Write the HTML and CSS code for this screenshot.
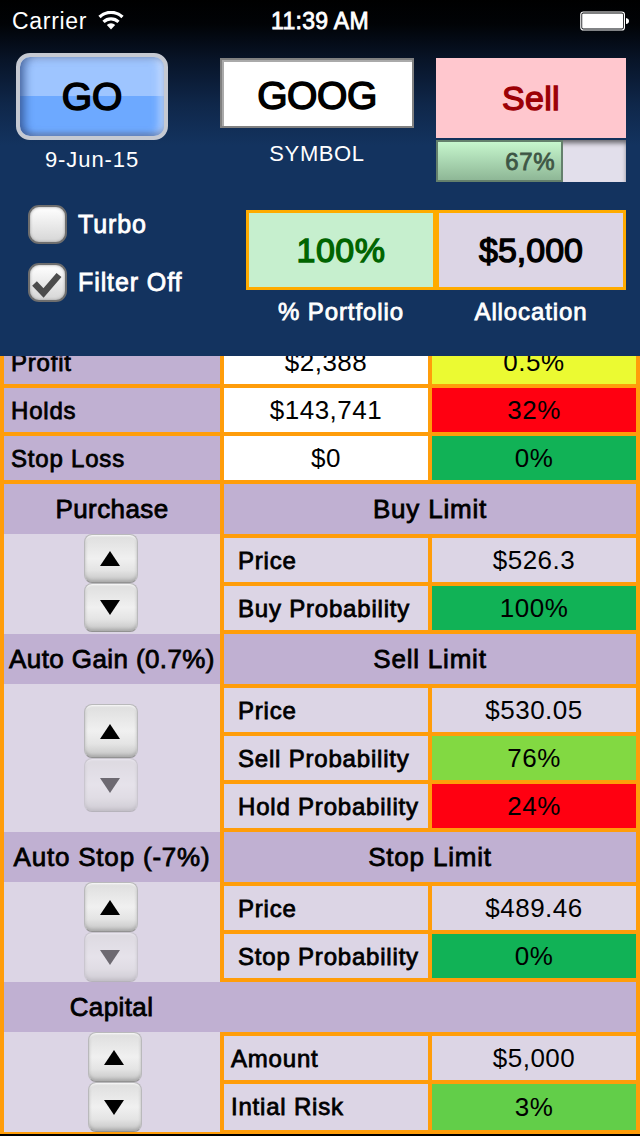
FILE: index.html
```
<!DOCTYPE html>
<html lang="en">
<head>
  <meta charset="UTF-8" />
  <meta name="viewport" content="width=device-width, initial-scale=1.0"/>
  <title>Trade Limits</title>
  <link rel="stylesheet" href="styles.css">
</head>
<body>
  <header class="header">
    <div class="status">
      <div class="carrier">
        <span>Carrier</span>
        <svg class="wifi" width="26" height="19" viewBox="0 0 26 19">
          <path d="M1.5 6 A16.5 16.5 0 0 1 24.5 6" fill="none" stroke="#fff" stroke-width="3.2"/>
          <path d="M5.5 10.8 A11 11 0 0 1 20.5 10.8" fill="none" stroke="#fff" stroke-width="3.2"/>
          <path d="M8.8 14 A6 6 0 0 1 17.2 14 L13 18.5 Z" fill="#fff"/>
        </svg>
      </div>
      <div class="time medium">11:39 AM</div>
      <svg class="battery" width="50" height="20" viewBox="0 0 50 20">
        <rect x="0.8" y="1" width="43.6" height="18" rx="2.5" fill="none" stroke="#fff" stroke-width="1.2"/>
        <rect x="2.2" y="2.4" width="40.8" height="15.2" rx="1" fill="#fff"/>
        <path d="M46 7 Q49 7.5 49 10 Q49 12.5 46 13 Z" fill="#fff"/>
      </svg>
    </div>

    <div class="quote">
      <div class="go-col">
        <button class="go medium">GO</button>
        <div class="date">9-Jun-15</div>
      </div>
      <div class="symbol-col">
        <div class="symbol medium">GOOG</div>
        <div class="caption">SYMBOL</div>
      </div>
      <div class="signal-col">
        <div class="signal medium">Sell</div>
        <div class="progress"><div class="progress-bar medium" style="width: 67%">67%</div></div>
      </div>
    </div>

    <div class="options">
      <div class="checks">
        <label class="check-row medium"><span class="check"></span>Turbo</label>
        <label class="check-row medium">
          <span class="check">
            <svg width="35" height="35" viewBox="0 0 35 35"><path d="M4.5 18.5 L13.5 28 L29 10" fill="none" stroke="#4c4c4c" stroke-width="6.5"/></svg>
          </span>Filter Off</label>
      </div>
      <div class="alloc">
        <div class="alloc-box portfolio medium">100%</div>
        <div class="alloc-box medium">$5,000</div>
        <div class="alloc-label medium">% Portfolio</div>
        <div class="alloc-label medium">Allocation</div>
      </div>
    </div>
  </header>

  <main class="results">
    <div class="summary">
      <div class="name medium">Profit</div><div class="value white">$2,388</div><div class="value yellow">0.5%</div>
      <div class="name medium">Holds</div><div class="value white">$143,741</div><div class="value red">32%</div>
      <div class="name medium">Stop Loss</div><div class="value white">$0</div><div class="value green">0%</div>
    </div>

    <section class="section">
      <div class="side">
        <div class="title medium">Purchase</div>
        <div class="stepper short">
          <button class="step"><span class="up"></span></button>
          <button class="step"><span class="down"></span></button>
        </div>
      </div>
      <div class="limits">
        <div class="title medium">Buy Limit</div>
        <div class="label medium">Price</div><div class="value">$526.3</div>
        <div class="label medium">Buy Probability</div><div class="value green">100%</div>
      </div>
    </section>

    <section class="section">
      <div class="side">
        <div class="title medium">Auto Gain (0.7%)</div>
        <div class="stepper tall">
          <button class="step"><span class="up"></span></button>
          <button class="step" disabled><span class="down"></span></button>
        </div>
      </div>
      <div class="limits">
        <div class="title medium">Sell Limit</div>
        <div class="label medium">Price</div><div class="value">$530.05</div>
        <div class="label medium">Sell Probability</div><div class="value lime">76%</div>
        <div class="label medium">Hold Probability</div><div class="value red">24%</div>
      </div>
    </section>

    <section class="section">
      <div class="side">
        <div class="title wide medium">Auto Stop (-7%)</div>
        <div class="stepper">
          <button class="step"><span class="up"></span></button>
          <button class="step" disabled><span class="down"></span></button>
        </div>
      </div>
      <div class="limits">
        <div class="title medium">Stop Limit</div>
        <div class="label medium">Price</div><div class="value">$489.46</div>
        <div class="label medium">Stop Probability</div><div class="value green">0%</div>
      </div>
    </section>

    <section class="section capital">
      <div class="title medium">Capital</div>
      <div class="side">
        <div class="stepper">
          <button class="step"><span class="up"></span></button>
          <button class="step"><span class="down"></span></button>
        </div>
      </div>
      <div class="limits">
        <div class="label medium">Amount</div><div class="value">$5,000</div>
        <div class="label medium">Intial Risk</div><div class="value light-green">3%</div>
      </div>
    </section>
  </main>
</body>
</html>
```
FILE: styles.css
```
* {
  box-sizing: border-box;
}

body {
  margin: 0;
  width: 640px;
  height: 1136px;
  overflow: hidden;
  background: #000;
  color: #000;
  font-family: "Liberation Sans", Arial, sans-serif;
}

button {
  padding: 0;
  border: none;
  font-family: inherit;
}

/* medium weight, between regular and bold */
.medium {
  -webkit-text-stroke: 0.8px currentColor;
}

/* Header */
.header {
  height: 356px;
  background: linear-gradient(#000 0, #010306 24px, #081428 60px, #0f274a 105px, #13335f 145px);
  color: #fff;
}

.status {
  display: grid;
  grid-template-columns: 1fr auto 1fr;
  align-items: center;
  height: 40px;
  padding: 2px 10px 0 12px;
  font-size: 23px;
}

.carrier {
  display: flex;
  align-items: center;
  gap: 11px;
  letter-spacing: 0.7px;
}

.wifi {
  margin-top: -2px;
}

.time {
  margin-right: 2px;
  letter-spacing: 0.3px;
}

.battery {
  justify-self: end;
  margin-top: -1px;
}

.quote {
  display: grid;
  grid-template-columns: 182px 194px 190px;
  column-gap: 22px;
  height: 160px;
  padding: 13px 14px 0 16px;
  text-align: center;
}

.go-col {
  width: 152px;
}

.go {
  width: 152px;
  height: 87px;
  border: 4px solid #c5c9d2;
  border-radius: 14px;
  background: linear-gradient(#9ec5ff 50%, #6da9ff 50%);
  box-shadow: inset 5px 0 8px rgba(30, 60, 120, 0.6), inset -4px 0 8px rgba(225, 235, 255, 0.7), inset 0 -3px 4px rgba(30, 60, 120, 0.4);
  color: #000;
  font-size: 39px;
  -webkit-text-stroke-width: 1.6px;
}

.date,
.caption {
  font-size: 22px;
  line-height: 26px;
}

.date {
  margin-top: 7px;
  letter-spacing: 0.9px;
}

.symbol-col,
.signal-col {
  padding-top: 5px;
}

.symbol {
  height: 70px;
  border: 2px solid #818181;
  box-shadow: inset 2px 2px 0 #aaa;
  background: #fff;
  color: #000;
  font-size: 39px;
  line-height: 72px;
  letter-spacing: -0.4px;
  -webkit-text-stroke-width: 1.5px;
}

.caption {
  margin-top: 13px;
  letter-spacing: 0.6px;
}

.signal {
  height: 80px;
  background: #ffc7ce;
  color: #9c0006;
  font-size: 34px;
  line-height: 81px;
  letter-spacing: 0.3px;
  -webkit-text-stroke-width: 1.3px;
}

.progress {
  height: 42px;
  margin-top: 2px;
  background: #e2dfeb;
  box-shadow: inset 0 4px 5px -1px rgba(0, 0, 0, 0.55);
}

.progress-bar {
  height: 42px;
  padding-right: 6px;
  border: 2px solid #64806c;
  background: linear-gradient(#c6f6cd, #8eb796);
  color: #3e5645;
  font-size: 24px;
  line-height: 39px;
  letter-spacing: 0.7px;
  text-align: right;
}

.options {
  display: flex;
  justify-content: space-between;
  padding: 4px 14px 0 28px;
}

.check-row {
  display: flex;
  align-items: center;
  height: 40px;
  margin-bottom: 18px;
  font-size: 25px;
  letter-spacing: 0.9px;
}

.check {
  width: 39px;
  height: 39px;
  margin-right: 11px;
  border: 2px solid #6e6e6e;
  border-radius: 11px;
  background: linear-gradient(#fff, #d6d6d6);
  box-shadow: inset 0 0 3px #999;
}

.alloc {
  display: grid;
  grid-template-columns: 190px 190px;
  margin-top: 6px;
  text-align: center;
}

.alloc-box {
  height: 80px;
  border: 3px solid #ffab00;
  background: #dcd5e5;
  color: #000;
  font-size: 34px;
  line-height: 75px;
  -webkit-text-stroke-width: 1.3px;
}

.alloc-box.portfolio {
  background: #c6efce;
  color: #006400;
  letter-spacing: 0.5px;
}

.alloc-label {
  padding-top: 8px;
  font-size: 24px;
  line-height: 28px;
  letter-spacing: 0.9px;
}

/* Results list, scrolled to its end */
.results {
  display: flex;
  flex-direction: column;
  justify-content: flex-end;
  height: 778px;
  overflow: hidden;
  padding: 0 4px;
  background: #ff9d0a;
}

.summary {
  display: grid;
  grid-template-columns: 216px 204px 204px;
  grid-auto-rows: 44px;
  gap: 4px;
  padding-bottom: 4px;
}

.name,
.label {
  font-size: 24px;
  line-height: 46px;
  letter-spacing: 0.8px;
  white-space: nowrap;
}

.name {
  padding-left: 7px;
  background: #c0b0d2;
}

.label {
  padding-left: 14px;
  background: #dcd5e5;
}

.value {
  background: #dcd5e5;
  font-size: 26px;
  line-height: 45px;
  letter-spacing: 0.5px;
  text-align: center;
}

.white {
  background: #fff;
}

.yellow {
  background: #ebfa32;
}

.red {
  background: #ff0011;
}

.green {
  background: #11b256;
}

.lime {
  background: #82d942;
}

.light-green {
  background: #62ce49;
}

.section {
  display: grid;
  grid-template-columns: 216px 412px;
  column-gap: 4px;
}

.side {
  display: flex;
  flex-direction: column;
  background: #dcd5e5;
}

.title {
  height: 50px;
  background: #c0b0d2;
  font-size: 26px;
  line-height: 51px;
  letter-spacing: 0.4px;
  text-align: center;
  white-space: nowrap;
}

.title.wide {
  letter-spacing: 0.8px;
}

.limits {
  display: grid;
  grid-template-columns: 204px 204px;
  grid-template-rows: 50px;
  grid-auto-rows: 44px;
  gap: 4px;
  padding-bottom: 4px;
}

.limits .title {
  grid-column: span 2;
  letter-spacing: 0.8px;
}

.stepper {
  display: flex;
  flex: 1;
  flex-direction: column;
  align-items: center;
  justify-content: center;
  padding-right: 2px;
}

.step {
  display: flex;
  align-items: center;
  justify-content: center;
  width: 54px;
  height: 50px;
  border: 1px solid #b9b9bb;
  border-bottom-color: #929292;
  border-radius: 8px;
  background: linear-gradient(#dedede, #f0f0f0 50%, #e4e4e4 75%, #c4c4c4);
  box-shadow: inset 0 -2px 3px #aaa, inset 0 1px 2px #fff;
}

.short {
  justify-content: flex-start;
}

.short .step {
  height: 49px;
}

.tall .step {
  height: 54px;
}

.step:disabled {
  opacity: 0.5;
}

.up,
.down {
  margin-right: 3px;
  border-left: 10px solid transparent;
  border-right: 10px solid transparent;
}

.up {
  border-bottom: 15px solid #000;
}

.down {
  border-top: 15px solid #000;
}

.capital .title {
  grid-column: span 2;
  padding-right: 417px;
}

.capital .side {
  margin-bottom: 2px;
}

.capital .stepper {
  padding-right: 0;
  padding-left: 6px;
}

.capital .limits {
  grid-template-rows: 44px 46px;
  padding-top: 4px;
}

.capital .label {
  padding-left: 7px;
}

.capital .light-green {
  line-height: 47px;
}
```
